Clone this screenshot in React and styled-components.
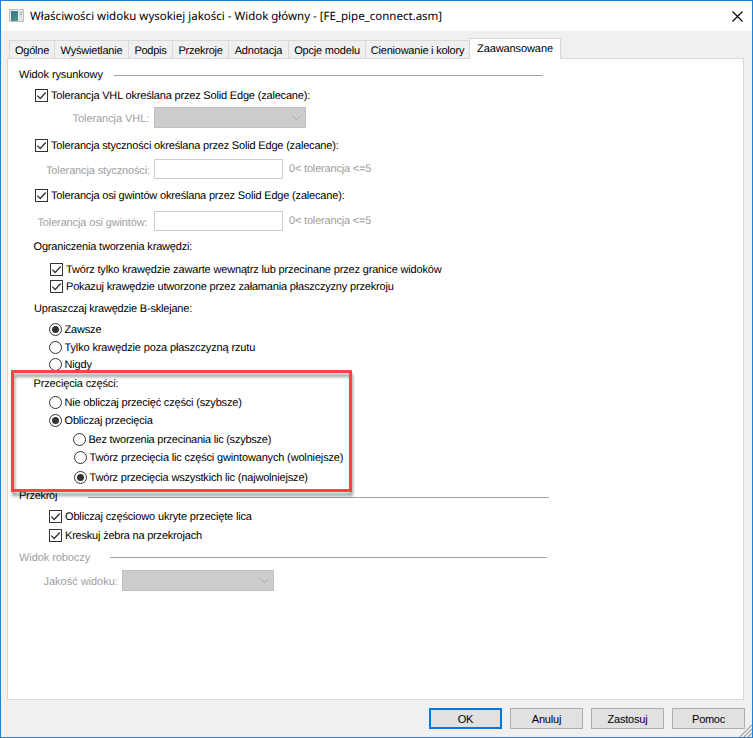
import React from 'react';
import styled, { createGlobalStyle } from 'styled-components';

const GlobalStyle = createGlobalStyle`
* { box-sizing: border-box; }
body {
    margin: 0;
    font: 11px/13px "Liberation Sans", Arial, sans-serif;
    letter-spacing: -0.18px;
    color: #000;
    text-rendering: geometricPrecision;
}
`;

const Window = styled.div`
display: flex;
flex-direction: column;
position: relative;
width: 753px;
height: 738px;
background: #f0f0f0;
border: 1px solid #1a82d8;
overflow: hidden;
`;

const TitleBar = styled.header`
display: flex;
align-items: center;
height: 30px;
padding: 0 9px 0 8px;
background: #fff;

svg { flex: none; }
`;

const Title = styled.h1`
flex: 1;
margin: 0 0 0 5px;
padding-top: 1px;
font: 400 11.5px/16px "Noto Sans", sans-serif;
letter-spacing: 0;
white-space: nowrap;
`;

const Tabs = styled.nav`
display: flex;
align-items: flex-end;
height: 27px;
padding-left: 8px;
`;

const Tab = styled.div`
display: flex;
justify-content: center;
width: ${props => props.$width}px;
height: ${props => props.$active ? 21 : 18}px;
margin-bottom: ${props => props.$active ? -1 : 0}px;
padding-top: 4px;
position: relative;
border: 1px solid #d9d9d9;
border-width: 1px ${props => props.$active ? 1 : 0}px 0 1px;
background: ${props => props.$active ? '#fff' : '#f0f0f0'};
letter-spacing: ${props => props.$ls || -0.18}px;
white-space: nowrap;
`;

const Panel = styled.main`
height: 642px;
margin: 0 8px 0 6px;
background: #fff;
border: 1px solid #d9d9d9;
`;

const Row = styled.div`
display: flex;
align-items: center;
height: 13px;
margin-top: ${props => props.$gap}px;
padding-left: ${props => props.$indent}px;
letter-spacing: ${props => props.$ls || -0.18}px;
white-space: nowrap;
`;

const Caption = styled.span`
padding-top: 2px;
`;

const Legend = styled(Row)`
width: ${props => props.$end}px;
color: ${props => props.$disabled ? '#a0a0a0' : '#000'};
`;

const LegendText = styled(Caption)`
width: ${props => props.$width}px;
`;

const Rule = styled.div`
flex: 1;
height: 1px;
margin-top: ${props => props.$drop ?? 2}px;
background: #a0a0a0;
`;

const Box = styled.span`
flex: none;
display: flex;
align-items: center;
justify-content: center;
width: 13px;
height: 13px;
margin-right: ${props => props.$round ? 2.5 : 3}px;
border: 1px solid #333;
border-radius: ${props => props.$round ? '50%' : 0};
background: #fff;
`;

const Dot = styled.span`
width: 7px;
height: 7px;
border-radius: 50%;
background: #333;
`;

const Field = styled.div`
display: flex;
height: ${props => props.$height || 20}px;
margin-top: ${props => props.$gap}px;
padding-left: ${props => props.$indent}px;
color: #a0a0a0;
white-space: nowrap;
`;

const FieldLabel = styled.label`
width: ${props => props.$width}px;
padding-top: 6px;
letter-spacing: ${props => props.$ls ?? -0.14}px;
`;

const Input = styled.div`
width: 129px;
border: 1px solid #ccc;
background: #fff;
`;

const Hint = styled.span`
padding: 4px 0 0 6px;
`;

const Combo = styled.div`
display: flex;
align-items: center;
justify-content: flex-end;
width: 152px;
padding-right: 4px;
border: 1px solid #bfbfbf;
background: #ccc;
`;

const Callout = styled.section`
position: relative;
width: 341px;
height: 122px;
margin: -1px 0 0 3px;
padding-top: 7px;

&::after {
    content: '';
    position: absolute;
    inset: 0;
    border: 3px solid #ff4343;
    filter: drop-shadow(1px 4px 1.5px rgba(0, 0, 0, 0.38));
}
`;

const Footer = styled.footer`
display: flex;
justify-content: flex-end;
gap: 8px;
padding: 8px 7px 0 0;
`;

const Button = styled.button`
width: 73px;
height: 21px;
padding: 2px 0 0;
border: ${props => props.$primary ? '2px solid #0078d7' : '1px solid #adadad'};
background: #e1e1e1;
color: #000;
font: inherit;
letter-spacing: ${props => props.$ls || -0.18}px;
`;

const Grip = styled.svg`
position: absolute;
right: 0;
bottom: 0;
`;

const WindowIcon = () => (
    <svg width="16" height="16" viewBox="0 0 16 16">
        <defs>
            <linearGradient id="pane" x1="0" y1="0" x2="1" y2="1">
                <stop offset="0" stopColor="#33708f" />
                <stop offset="1" stopColor="#4f9c7c" />
            </linearGradient>
        </defs>
        <rect x="0.5" y="1.5" width="14" height="12" fill="#eceff1" stroke="#b9c0c5" />
        <rect x="2" y="3" width="7" height="10" fill="url(#pane)" />
        <rect x="10" y="3" width="4" height="10" fill="#dde2e5" />
        <path d="M11 4.5h2M11 6.5h2" stroke="#9da6ac" />
    </svg>
);

const CloseIcon = () => (
    <svg width="11" height="11" viewBox="0 0 11 11">
        <path d="M0.5 0.5l10 10M10.5 0.5l-10 10" stroke="#000" strokeWidth="1.1" />
    </svg>
);

const Check = ({ indent, gap, ls, children }) => (
    <Row $indent={indent} $gap={gap} $ls={ls}>
        <Box>
            <svg width="11" height="11" viewBox="0 0 11 11">
                <path d="M1.3 5.6l2.9 2.9l5.5-6" fill="none" stroke="#333" strokeWidth="1.3" />
            </svg>
        </Box>
        <Caption>{children}</Caption>
    </Row>
);

const Radio = ({ indent, gap, ls, checked, children }) => (
    <Row $indent={indent} $gap={gap} $ls={ls}>
        <Box $round>{checked && <Dot />}</Box>
        <Caption>{children}</Caption>
    </Row>
);

const Heading = ({ indent, gap, ls, children }) => (
    <Row $indent={indent} $gap={gap} $ls={ls}>
        <Caption>{children}</Caption>
    </Row>
);

const Select = () => (
    <Combo>
        <svg width="9" height="6" viewBox="0 0 9 6">
            <path d="M0.5 0.8l4 4l4-4" fill="none" stroke="#a3a3a3" />
        </svg>
    </Combo>
);

const tabs = [
    { name: 'Ogólne', width: 45, ls: -0.22 },
    { name: 'Wyświetlanie', width: 74 },
    { name: 'Podpis', width: 44, ls: -0.24 },
    { name: 'Przekroje', width: 56, ls: -0.26 },
    { name: 'Adnotacja', width: 60, ls: -0.14 },
    { name: 'Opcje modelu', width: 77 },
    { name: 'Cieniowanie i kolory', width: 104, ls: -0.22 },
    { name: 'Zaawansowane', width: 92, ls: -0.1, active: true },
];

const App = () => {
    return (
        <>
            <GlobalStyle />
            <Window>
                <TitleBar>
                    <WindowIcon />
                    <Title>Właściwości widoku wysokiej jakości - Widok główny - [FE_pipe_connect.asm]</Title>
                    <CloseIcon />
                </TitleBar>
                <Tabs>
                    {tabs.map(tab => (
                        <Tab key={tab.name} $width={tab.width} $ls={tab.ls} $active={tab.active}>{tab.name}</Tab>
                    ))}
                </Tabs>
                <Panel>
                    <Legend $indent={11} $gap={9} $end={535} $ls={-0.12}>
                        <LegendText $width={95}>Widok rysunkowy</LegendText>
                        <Rule />
                    </Legend>
                    <Check indent={27} gap={8}>Tolerancja VHL określana przez Solid Edge (zalecane):</Check>
                    <Field $indent={64.5} $gap={5} $height={21}>
                        <FieldLabel $width={81.5} $ls={-0.06}>Tolerancja VHL:</FieldLabel>
                        <Select />
                    </Field>
                    <Check indent={27} gap={11}>Tolerancja styczności określana przez Solid Edge (zalecane):</Check>
                    <Field $indent={38} $gap={7}>
                        <FieldLabel $width={108}>Tolerancja styczności:</FieldLabel>
                        <Input />
                        <Hint>0&lt; tolerancja &lt;=5</Hint>
                    </Field>
                    <Check indent={27} gap={10}>Tolerancja osi gwintów określana przez Solid Edge (zalecane):</Check>
                    <Field $indent={29.5} $gap={9}>
                        <FieldLabel $width={116.5}>Tolerancja osi gwintów:</FieldLabel>
                        <Input />
                        <Hint>0&lt; tolerancja &lt;=5</Hint>
                    </Field>

                    <Heading indent={25.5} gap={9}>Ograniczenia tworzenia krawędzi:</Heading>
                    <Check indent={42} gap={10} ls={-0.16}>Twórz tylko krawędzie zawarte wewnątrz lub przecinane przez granice widoków</Check>
                    <Check indent={42} gap={4}>Pokazuj krawędzie utworzone przez załamania płaszczyzny przekroju</Check>

                    <Heading indent={26} gap={9} ls={-0.2}>Upraszczaj krawędzie B-sklejane:</Heading>
                    <Radio indent={41} gap={8} checked>Zawsze</Radio>
                    <Radio indent={41} gap={5} ls={-0.13}>Tylko krawędzie poza płaszczyzną rzutu</Radio>
                    <Radio indent={41} gap={4}>Nigdy</Radio>

                    <Callout>
                        <Heading indent={22.5} gap={0} ls={-0.14}>Przecięcia części:</Heading>
                        <Radio indent={38} gap={6}>Nie obliczaj przecięć części (szybsze)</Radio>
                        <Radio indent={38} gap={5} checked>Obliczaj przecięcia</Radio>
                        <Radio indent={62} gap={6} ls={-0.24}>Bez tworzenia przecinania lic (szybsze)</Radio>
                        <Radio indent={63} gap={5} ls={-0.16}>Twórz przecięcia lic części gwintowanych (wolniejsze)</Radio>
                        <Radio indent={63} gap={7} checked>Twórz przecięcia wszystkich lic (najwolniejsze)</Radio>
                    </Callout>

                    <Legend $indent={11} $gap={-3} $end={541} $ls={-0.28}>
                        <LegendText $width={69}>Przekrój</LegendText>
                        <Rule $drop={4} />
                    </Legend>
                    <Check indent={41} gap={8} ls={-0.16}>Obliczaj częściowo ukryte przecięte lica</Check>
                    <Check indent={41} gap={6} ls={-0.2}>Kreskuj żebra na przekrojach</Check>
                    <Legend $indent={11} $gap={9} $end={539} $ls={-0.08} $disabled>
                        <LegendText $width={91}>Widok roboczy</LegendText>
                        <Rule $drop={0} />
                    </Legend>
                    <Field $indent={35.5} $gap={6} $height={21}>
                        <FieldLabel $width={78.5} $ls={-0.02}>Jakość widoku:</FieldLabel>
                        <Select />
                    </Field>
                </Panel>
                <Footer>
                    <Button $primary $ls={-0.1}>OK</Button>
                    <Button $ls={-0.2}>Anuluj</Button>
                    <Button>Zastosuj</Button>
                    <Button $ls={-0.28}>Pomoc</Button>
                </Footer>
                <Grip width="13" height="13" viewBox="0 0 13 13">
                    <path d="M1 13L13 1M5 13l8-8M9 13l4-4" stroke="#a0a0a0" strokeWidth="1.4" />
                    <path d="M2.5 13L13 2.5M6.5 13l6.5-6.5" stroke="#fff" strokeWidth="0.8" />
                </Grip>
            </Window>
        </>
    )
}

export default App;
